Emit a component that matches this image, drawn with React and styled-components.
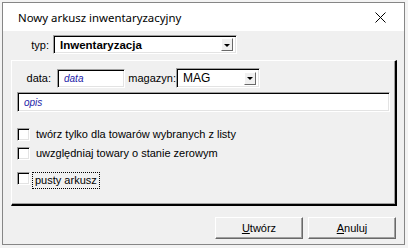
import styled, { createGlobalStyle } from 'styled-components'

const Global = createGlobalStyle`
    html, body {
        margin: 0;
        background: #f3f3f3;
    }
    body {
        font-family: "Liberation Sans", Arial, sans-serif;
        font-size: 11px;
        color: #000;
    }
`

const Page = styled.div`
    width: 408px;
    height: 248px;
    padding: 2px 3px 3px 2px;
    box-sizing: border-box;
`

const Window = styled.div`
    height: 100%;
    border: 1px solid #868686;
    box-sizing: border-box;
    display: flex;
    flex-direction: column;
    background: #f0f0f0;
`

const TitleBar = styled.div`
    height: 28px;
    background: #fff;
    display: flex;
    align-items: center;
    justify-content: space-between;
    padding: 0 18px 0 15px;
`

const Title = styled.span`
    font-family: "Noto Sans", "Open Sans", sans-serif;
    font-size: 11.4px;
`

const Body = styled.div`
    flex: 1;
    display: flex;
    flex-direction: column;
    padding: 4px 7px 5px 8px;
`

const Row = styled.div`
    display: flex;
    align-items: center;
    margin-top: ${p => p.$top || 0}px;
`

const Label = styled.span`
    width: ${p => p.$w}px;
    text-align: right;
    padding-right: ${p => p.$pad ?? 4}px;
    box-sizing: border-box;
`

const Sunken = styled.div`
    width: ${p => p.$w}px;
    height: ${p => p.$h || 18}px;
    box-sizing: border-box;
    background: #fff;
    border-top: 1px solid #a0a0a0;
    border-left: 1px solid #a0a0a0;
    border-right: 1px solid #fff;
    border-bottom: 1px solid #fff;
    box-shadow: inset 1px 1px 0 #000, inset -1px -1px 0 #e3e3e3;
    display: flex;
    align-items: center;
    padding: 0 3px 0 6px;
`

const ComboText = styled.span`
    flex: 1;
    font-weight: ${p => (p.$bold ? 700 : 400)};
    font-size: ${p => (p.$bold ? 11.5 : 12)}px;
`

const Hint = styled.span`
    font-style: italic;
    color: #1c1ca8;
    font-size: 10px;
`

const Arrow = styled.div`
    width: 12px;
    height: 13px;
    box-sizing: border-box;
    background: #f0f0f0;
    border-top: 1px solid #fff;
    border-left: 1px solid #fff;
    border-right: 1px solid #696969;
    border-bottom: 1px solid #696969;
    display: flex;
    align-items: center;
    justify-content: center;

    &::after {
        content: '';
        border-left: 3px solid transparent;
        border-right: 3px solid transparent;
        border-top: 3px solid #000;
        margin-top: 1px;
    }
`

const Panel = styled.div`
    margin-top: 6px;
    height: 146px;
    box-sizing: border-box;
    border-top: 1px solid #fff;
    border-left: 1px solid #fff;
    border-right: 2px solid #000;
    border-bottom: 2px solid #000;
    box-shadow: inset -1px -1px 0 #a0a0a0;
    padding: 7px 5px 0 5px;
    display: flex;
    flex-direction: column;
`

const Checks = styled.div`
    display: flex;
    flex-direction: column;
    margin-top: 16px;
`

const CheckRow = styled.label`
    display: flex;
    align-items: center;
    height: 13px;
    margin-top: ${p => p.$top || 0}px;
`

const Box = styled.span`
    width: 13px;
    height: 13px;
    box-sizing: border-box;
    background: #fff;
    border-top: 1px solid #a0a0a0;
    border-left: 1px solid #a0a0a0;
    border-right: 1px solid #fff;
    border-bottom: 1px solid #fff;
    box-shadow: inset 1px 1px 0 #000, inset -1px -1px 0 #e3e3e3;
`

const CheckText = styled.span`
    margin-left: ${p => (p.$focus ? 3 : 6)}px;
    padding: ${p => (p.$focus ? '1px 2px' : '0')};
    outline: ${p => (p.$focus ? '1px dotted #000' : 'none')};
    font-size: 11px;
    line-height: 13px;
    ${p => p.$focus && 'margin-top: 4px;'}
`

const Buttons = styled.div`
    margin-top: auto;
    display: flex;
    justify-content: flex-end;
    gap: 5px;
    padding-right: 1px;
`

const Button = styled.button`
    width: 88px;
    height: 22px;
    box-sizing: border-box;
    background: #f0f0f0;
    border: none;
    border-top: 1px solid #fff;
    border-left: 1px solid #fff;
    border-right: 1px solid #696969;
    border-bottom: 1px solid #696969;
    box-shadow: inset -1px -1px 0 #a0a0a0;
    font-family: "Liberation Sans", Arial, sans-serif;
    font-size: 11px;
    color: #000;
    padding: 0;

    u {
        text-decoration: underline;
    }
`

const Close = () => (
    <svg width="11" height="11" viewBox="0 0 11 11">
        <path d="M0.5 0.5 L10.5 10.5 M10.5 0.5 L0.5 10.5" stroke="#000" strokeWidth="1" fill="none" />
    </svg>
)

const Check = ({ children, top, focus }) => (
    <CheckRow $top={top}>
        <Box />
        <CheckText $focus={focus}>{children}</CheckText>
    </CheckRow>
)

export default function App() {
    return (
        <Page>
            <Global />
            <Window>
                <TitleBar>
                    <Title>Nowy arkusz inwentaryzacyjny</Title>
                    <Close />
                </TitleBar>
                <Body>
                    <Row>
                        <Label $w={42}>typ:</Label>
                        <Sunken $w={184} $h={19}>
                            <ComboText $bold>Inwentaryzacja</ComboText>
                            <Arrow />
                        </Sunken>
                    </Row>
                    <Panel>
                        <Row>
                            <Label $w={40} $pad={6}>data:</Label>
                            <Sunken $w={68} $h={19}>
                                <Hint>data</Hint>
                            </Sunken>
                            <Label $w={51} $pad={0}>magazyn:</Label>
                            <Sunken $w={84} $h={20}>
                                <ComboText>MAG</ComboText>
                                <Arrow />
                            </Sunken>
                        </Row>
                        <Row $top={4}>
                            <Sunken $w={373} $h={20}>
                                <Hint>opis</Hint>
                            </Sunken>
                        </Row>
                        <Checks>
                            <Check>twórz tylko dla towarów wybranych z listy</Check>
                            <Check top={6}>uwzględniaj towary o stanie zerowym</Check>
                            <Check top={12} focus>pusty arkusz</Check>
                        </Checks>
                    </Panel>
                    <Buttons>
                        <Button><u>U</u>twórz</Button>
                        <Button><u>A</u>nuluj</Button>
                    </Buttons>
                </Body>
            </Window>
        </Page>
    )
}
